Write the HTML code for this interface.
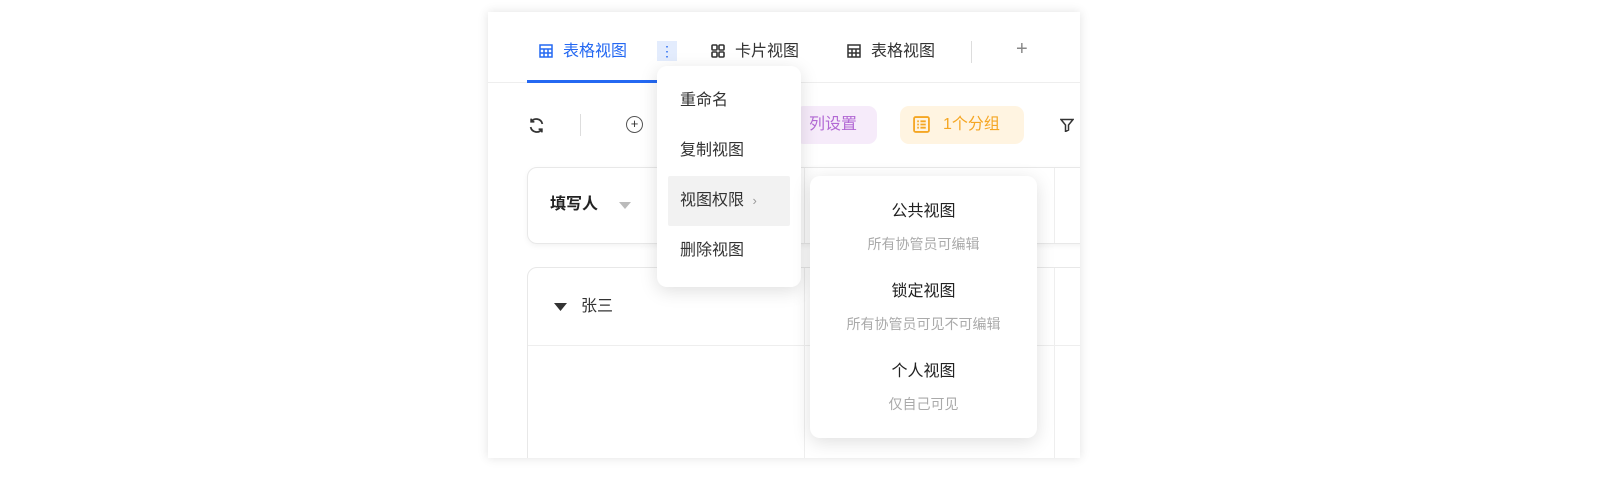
<!DOCTYPE html><html><head><meta charset="utf-8"><style>
*{margin:0;padding:0;box-sizing:border-box}
body{width:1600px;height:478px;background:#fff;font-family:"Liberation Sans","Noto Sans CJK SC",sans-serif;position:relative;overflow:hidden;color:#333}
.a{position:absolute}
.card{left:488px;top:12px;width:592px;height:446px;background:#fff;box-shadow:0 0 10px rgba(0,0,0,.12);overflow:hidden}
.t{font-size:16px;white-space:nowrap;line-height:20px}
.menu{background:#fff;border-radius:10px;box-shadow:0 4px 18px rgba(0,0,0,.13)}
.c{text-align:center;width:100%}
svg{position:absolute}
</style></head><body>
<div class="a card">
 <div class="a" style="left:0;top:70px;width:592px;height:1px;background:#eee"></div>
 <div class="a" style="left:39px;top:68px;width:130px;height:3px;background:#2468f2"></div>
 <svg style="left:51px;top:32px" width="14" height="14" viewBox="0 0 14 14" fill="none" stroke="#2468f2" stroke-width="1.5"><rect x="1" y="1" width="12" height="12"/><path d="M1 5h12M1 9h12M5 5v8M9 5v8"/></svg>
 <div class="a t" style="left:75px;top:30px;color:#2468f2">表格视图</div>
 <div class="a" style="left:169px;top:29px;width:20px;height:20px;background:#e3ecfd;color:#2468f2;text-align:center;font-size:14px;line-height:20px">⋮</div>
 <svg style="left:223px;top:32px" width="14" height="14" viewBox="0 0 14 14" fill="none" stroke="#333" stroke-width="1.6"><rect x="1" y="1" width="5" height="5" rx="1"/><rect x="8" y="1" width="5" height="5" rx="1"/><rect x="1" y="8" width="5" height="5" rx="1"/><rect x="8" y="8" width="5" height="5" rx="1"/></svg>
 <div class="a t" style="left:247px;top:30px">卡片视图</div>
 <svg style="left:359px;top:32px" width="14" height="14" viewBox="0 0 14 14" fill="none" stroke="#333" stroke-width="1.5"><rect x="1" y="1" width="12" height="12"/><path d="M1 5h12M1 9h12M5 5v8M9 5v8"/></svg>
 <div class="a t" style="left:383px;top:30px">表格视图</div>
 <div class="a" style="left:483px;top:29px;width:1px;height:22px;background:#ddd"></div>
 <div class="a t" style="left:528px;top:27px;color:#888;font-size:20px">+</div>
 <svg style="left:40px;top:105px" width="17" height="17" viewBox="0 0 16 16" fill="none" stroke="#333" stroke-width="1.7"><path d="M13.5 6.5A5.8 5.8 0 0 0 3 4.5M2.5 9.5A5.8 5.8 0 0 0 13 11.5"/><path d="M3 1.5v3h3M13 14.5v-3h-3"/></svg>
 <div class="a" style="left:92px;top:102px;width:1px;height:22px;background:#ddd"></div>
 <div class="a" style="left:138px;top:104px;width:17px;height:17px;border:1.5px solid #555;border-radius:50%;text-align:center;font-size:13px;line-height:14px">+</div>
 <div class="a" style="left:307px;top:94px;width:82px;height:38px;border-radius:9px;background:#f6ebfa"></div>
 <div class="a t" style="left:321px;top:103px;color:#b268d4">列设置</div>
 <div class="a" style="left:412px;top:94px;width:124px;height:38px;border-radius:9px;background:#fff4e1"></div>
 <svg style="left:425px;top:104px" width="17" height="17" viewBox="0 0 16 16" fill="none" stroke="#f5a623" stroke-width="1.7"><rect x="1" y="1" width="14" height="14" rx="1.5"/><path d="M4 5h1.5M7 5h5M4 8h1.5M7 8h5M4 11h1.5M7 11h5"/></svg>
 <div class="a t" style="left:455px;top:103px;color:#f5a623">1个分组</div>
 <svg style="left:572px;top:106px" width="14" height="14" viewBox="0 0 14 14" fill="none" stroke="#333" stroke-width="1.5"><path d="M1 1.5h12L8.5 7v5l-3 1.5V7z"/></svg>
 <div class="a" style="left:39px;top:155px;width:600px;height:77px;border:1px solid #e8e8e8;border-radius:10px;box-shadow:0 2px 6px rgba(0,0,0,.05)"></div>
 <div class="a" style="left:316px;top:156px;width:1px;height:75px;background:#eee"></div>
 <div class="a" style="left:566px;top:156px;width:1px;height:75px;background:#eee"></div>
 <div class="a t" style="left:62px;top:183px;font-weight:bold;color:#222">填写人</div>
 <svg style="left:131px;top:190px" width="12" height="8" viewBox="0 0 12 8"><path d="M0 0h12L6 7z" fill="#bbb"/></svg>
 <div class="a" style="left:39px;top:255px;width:600px;height:220px;border:1px solid #e8e8e8;border-radius:10px"></div>
 <div class="a" style="left:40px;top:333px;width:600px;height:1px;background:#eee"></div>
 <div class="a" style="left:316px;top:256px;width:1px;height:200px;background:#eee"></div>
 <div class="a" style="left:566px;top:256px;width:1px;height:200px;background:#eee"></div>
 <svg style="left:66px;top:291px" width="13" height="9" viewBox="0 0 13 9"><path d="M0 0h13L6.5 8z" fill="#333"/></svg>
 <div class="a t" style="left:93px;top:285px">张三</div>
</div>
<div class="a menu" style="left:657px;top:66px;width:144px;height:221px">
 <div class="a" style="left:11px;top:110px;width:122px;height:50px;background:#f2f2f2;border-radius:2px"></div>
 <div class="a t" style="left:23px;top:25px">重命名</div>
 <div class="a t" style="left:23px;top:75px">复制视图</div>
 <div class="a t" style="left:23px;top:125px">视图权限 <span style="color:#999;font-size:13px;margin-left:4px">›</span></div>
 <div class="a t" style="left:23px;top:175px">删除视图</div>
</div>
<div class="a menu" style="left:810px;top:176px;width:227px;height:262px">
 <div class="a t c" style="top:26px;color:#222">公共视图</div>
 <div class="a t c" style="top:58px;font-size:14px;color:#aaa">所有协管员可编辑</div>
 <div class="a t c" style="top:106px;color:#222">锁定视图</div>
 <div class="a t c" style="top:138px;font-size:14px;color:#aaa">所有协管员可见不可编辑</div>
 <div class="a t c" style="top:186px;color:#222">个人视图</div>
 <div class="a t c" style="top:218px;font-size:14px;color:#aaa">仅自己可见</div>
</div>
</body></html>
